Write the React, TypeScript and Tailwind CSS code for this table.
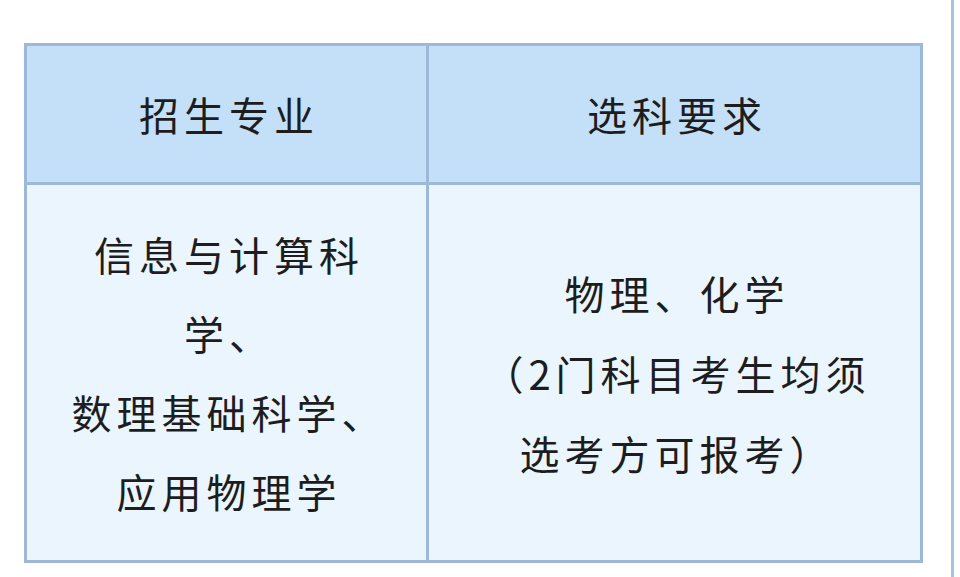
const font = { fontFamily: '"Noto Sans CJK SC", "Noto Sans", sans-serif' }

export default function App() {
  return (
    <div className="w-[960px] h-[577px] bg-white flex overflow-hidden" style={font}>
      <div className="w-[954px] h-full border-r-[3px] border-[#aac2dc] pt-[43px] pl-[24px]">
        <div className="w-[899px] border-[3px] border-[#9db9d7] text-[#1d1d1d] text-[40px] tracking-[5px]">
          <div className="flex h-[139px] bg-[#c4e0f8] border-b-[3px] border-[#9db9d7]">
            <div className="w-[402px] border-r-[3px] border-[#9db9d7] flex items-center justify-center pl-[5px]">
              招生专业
            </div>
            <div className="flex-1 flex items-center justify-center pl-[5px]">选科要求</div>
          </div>
          <div className="flex h-[375px] bg-[#eaf5fd] leading-[79px]">
            <div className="w-[402px] border-r-[3px] border-[#9db9d7] flex flex-col items-center justify-center pl-[5px] text-center">
              <span>信息与计算科</span>
              <span>学、</span>
              <span>数理基础科学、</span>
              <span>应用物理学</span>
            </div>
            <div className="flex-1 flex flex-col items-center justify-center pl-[5px] text-center leading-[80px]">
              <span>物理、化学</span>
              <span>（2门科目考生均须</span>
              <span>选考方可报考）</span>
            </div>
          </div>
        </div>
      </div>
    </div>
  )
}
